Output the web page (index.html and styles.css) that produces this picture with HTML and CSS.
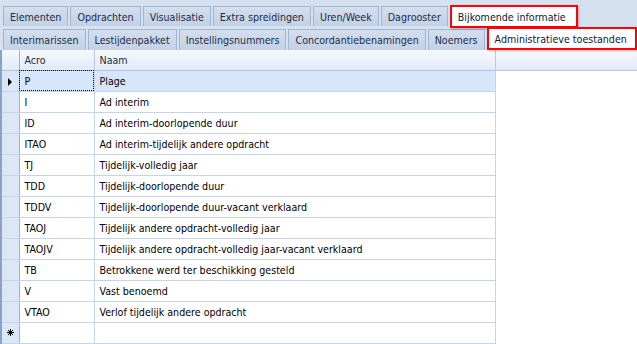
FILE: index.html
```html
<!DOCTYPE html>
<html lang="nl">
<head>
    <meta charset="UTF-8">
    <title>Administratieve toestanden</title>
    <link rel="stylesheet" href="styles.css">
</head>
<body>
    <div class="tabs tabs-main">
        <span class="tab">Elementen</span>
        <span class="tab">Opdrachten</span>
        <span class="tab">Visualisatie</span>
        <span class="tab">Extra spreidingen</span>
        <span class="tab">Uren/Week</span>
        <span class="tab">Dagrooster</span>
        <span class="tab active">Bijkomende informatie</span>
    </div>
    <div class="tabs tabs-sub">
        <span class="tab">Interimarissen</span>
        <span class="tab">Lestijdenpakket</span>
        <span class="tab">Instellingsnummers</span>
        <span class="tab">Concordantiebenamingen</span>
        <span class="tab">Noemers</span>
        <span class="tab active">Administratieve toestanden</span>
    </div>
    <div class="grid">
        <table>
            <thead>
                <tr>
                    <th class="rowhead"></th>
                    <th class="acro">Acro</th>
                    <th class="naam">Naam</th>
                    <th class="filler"></th>
                </tr>
            </thead>
            <tbody>
                <tr class="selected">
                    <td class="rowhead"><span class="arrow"></span></td>
                    <td class="focus">P</td>
                    <td>Plage</td>
                    <td class="filler"></td>
                </tr>
                <tr><td class="rowhead"></td><td>I</td><td>Ad interim</td><td class="filler"></td></tr>
                <tr><td class="rowhead"></td><td>ID</td><td>Ad interim-doorlopende duur</td><td class="filler"></td></tr>
                <tr><td class="rowhead"></td><td>ITAO</td><td>Ad interim-tijdelijk andere opdracht</td><td class="filler"></td></tr>
                <tr><td class="rowhead"></td><td>TJ</td><td>Tijdelijk-volledig jaar</td><td class="filler"></td></tr>
                <tr><td class="rowhead"></td><td>TDD</td><td>Tijdelijk-doorlopende duur</td><td class="filler"></td></tr>
                <tr><td class="rowhead"></td><td>TDDV</td><td>Tijdelijk-doorlopende duur-vacant verklaard</td><td class="filler"></td></tr>
                <tr><td class="rowhead"></td><td>TAOJ</td><td>Tijdelijk andere opdracht-volledig jaar</td><td class="filler"></td></tr>
                <tr><td class="rowhead"></td><td>TAOJV</td><td>Tijdelijk andere opdracht-volledig jaar-vacant verklaard</td><td class="filler"></td></tr>
                <tr><td class="rowhead"></td><td>TB</td><td>Betrokkene werd ter beschikking gesteld</td><td class="filler"></td></tr>
                <tr><td class="rowhead"></td><td>V</td><td>Vast benoemd</td><td class="filler"></td></tr>
                <tr><td class="rowhead"></td><td>VTAO</td><td>Verlof tijdelijk andere opdracht</td><td class="filler"></td></tr>
                <tr class="newrow">
                    <td class="rowhead">
                        <svg width="7" height="7" viewBox="0 0 7 7">
                            <path d="M3.5 0v7M0 3.5h7M1 1l5 5M6 1l-5 5" stroke="#000" stroke-width="1"/>
                        </svg>
                    </td>
                    <td></td>
                    <td></td>
                    <td class="filler"></td>
                </tr>
            </tbody>
        </table>
    </div>
</body>
</html>
```

FILE: styles.css
```css
* {
    margin: 0;
    padding: 0;
    box-sizing: border-box;
}
body {
    width: 637px;
    height: 344px;
    overflow: hidden;
    background: #d5e0f1;
    font-family: "DejaVu Sans Condensed", "DejaVu Sans", sans-serif;
    font-size: 10.6px;
    color: #1b2c46;
}
.tabs {
    display: flex;
    gap: 2px;
    padding-left: 3px;
    height: 21px;
}
.tabs-main {
    margin-top: 6px;
    height: 20px;
}
.tabs-sub {
    margin-top: 3px;
}
.tab {
    display: flex;
    align-items: center;
    padding: 0 6px;
    background: linear-gradient(#d3deee, #c3d1e6);
    border: 1px solid #a2b5d0;
    border-bottom: 0;
    white-space: nowrap;
}
.tab.active {
    position: relative;
    background: #fff;
    border: 2px solid #f00;
    margin-top: -1px;
    height: 23px;
    padding: 0 10px 0 6px;
    color: #0e1b33;
    box-shadow: 1px 1px 2px rgba(0, 0, 0, 0.25);
}
.tabs-sub .tab.active {
    margin-top: -2px;
    padding-right: 8px;
}
.grid {
    background: #fff;
    border-left: 2px solid #8aa2c6;
    height: 294px;
}
table {
    border-collapse: collapse;
    width: 635px;
    color: #000;
}
th, td {
    height: 21px;
    padding: 0 5px;
    text-align: left;
    font-weight: normal;
    border-right: 1px solid #c3d5ee;
    border-bottom: 1px solid #c3d5ee;
    white-space: nowrap;
}
th {
    height: 20px;
    background: linear-gradient(#f6f9fd, #e2eaf6);
    border-right: 1px solid #b7c8e0;
    border-bottom: 1px solid #b0c2dc;
    color: #1b2c46;
}
.rowhead {
    width: 17px;
    padding: 0;
    background: #dce7f5;
    border-right: 1px solid #9db2d1;
    border-bottom: 1px solid #c3d5ee;
    text-align: center;
}
th.rowhead {
    background: linear-gradient(#f6f9fd, #e2eaf6);
    border-bottom: 1px solid #b0c2dc;
}
.acro {
    width: 75px;
}
.naam {
    width: 401px;
}
td.filler {
    border: 0;
    background: #fff;
}
th.filler {
    border-right: 0;
}
.selected td {
    background: #d7e6fa;
}
.selected td.rowhead {
    background: #dce7f5;
}
.selected td.filler {
    background: #fff;
}
.focus {
    outline: 1px dotted #000;
    outline-offset: -1px;
}
.arrow {
    display: inline-block;
    border-left: 4px solid #000;
    border-top: 4px solid transparent;
    border-bottom: 4px solid transparent;
    vertical-align: middle;
}
.newrow svg {
    display: block;
    margin: 0 auto;
}
```
